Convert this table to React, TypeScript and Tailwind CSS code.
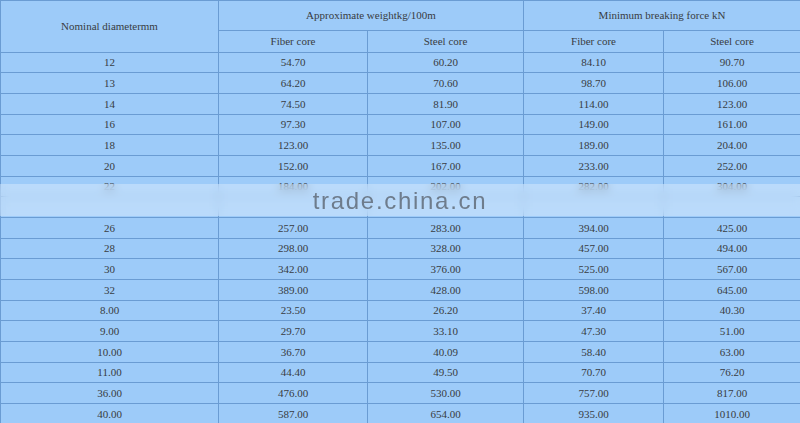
import React from "react";

const rows: string[][] = [
  ["12", "54.70", "60.20", "84.10", "90.70"],
  ["13", "64.20", "70.60", "98.70", "106.00"],
  ["14", "74.50", "81.90", "114.00", "123.00"],
  ["16", "97.30", "107.00", "149.00", "161.00"],
  ["18", "123.00", "135.00", "189.00", "204.00"],
  ["20", "152.00", "167.00", "233.00", "252.00"],
  ["22", "184.00", "202.00", "282.00", "304.00"],
  ["", "", "", "", ""],
  ["26", "257.00", "283.00", "394.00", "425.00"],
  ["28", "298.00", "328.00", "457.00", "494.00"],
  ["30", "342.00", "376.00", "525.00", "567.00"],
  ["32", "389.00", "428.00", "598.00", "645.00"],
  ["8.00", "23.50", "26.20", "37.40", "40.30"],
  ["9.00", "29.70", "33.10", "47.30", "51.00"],
  ["10.00", "36.70", "40.09", "58.40", "63.00"],
  ["11.00", "44.40", "49.50", "70.70", "76.20"],
  ["36.00", "476.00", "530.00", "757.00", "817.00"],
  ["40.00", "587.00", "654.00", "935.00", "1010.00"],
];

const cell = "border border-[#6a9cd3] text-center align-middle p-0 font-normal";

export default function App() {
  return (
    <div className="relative w-[800px] h-[423px] overflow-hidden bg-[#9dcbf9] font-['Liberation_Serif',serif] text-[11px] text-[#383c42]">
      <table className="w-[800px] table-fixed border-collapse">
        <colgroup>
          <col className="w-[218px]" />
          <col className="w-[149px]" />
          <col className="w-[156px]" />
          <col className="w-[140px]" />
          <col className="w-[137px]" />
        </colgroup>
        <thead>
          <tr className="h-[29.5px]">
            <th rowSpan={2} className={cell}>
              Nominal diametermm
            </th>
            <th colSpan={2} className={cell}>
              Approximate weightkg/100m
            </th>
            <th colSpan={2} className={cell}>
              Minimum breaking force kN
            </th>
          </tr>
          <tr className="h-[22.2px]">
            <th className={cell}>Fiber core</th>
            <th className={cell}>Steel core</th>
            <th className={cell}>Fiber core</th>
            <th className={cell}>Steel core</th>
          </tr>
        </thead>
        <tbody>
          {rows.map((r, i) => (
            <tr key={i} className="h-[20.68px]">
              {r.map((v, j) => (
                <td key={j} className={cell}>
                  {v}
                </td>
              ))}
            </tr>
          ))}
        </tbody>
      </table>

      {/* watermark band */}
      <div className="absolute left-0 right-0 top-[184px] h-[32px] bg-white/30 backdrop-blur-[5px] flex items-center justify-center">
        <span className="font-['Liberation_Sans',sans-serif] text-[24px] tracking-[1.7px] text-[#6e7c8c] leading-none mt-[2px]">
          trade.china.cn
        </span>
      </div>
    </div>
  );
}
